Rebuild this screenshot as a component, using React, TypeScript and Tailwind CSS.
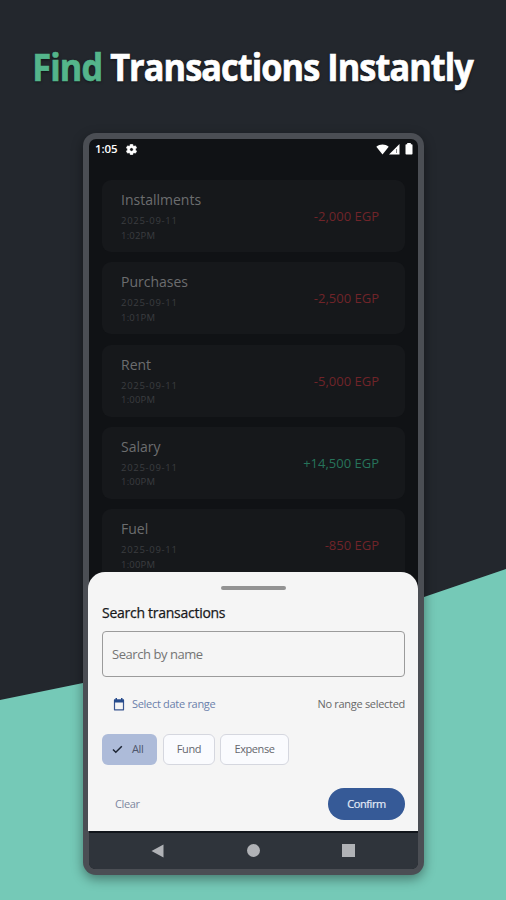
import React from "react";

type Transaction = { name: string; time: string; amount: string; income?: boolean };

const transactions: Transaction[] = [
  { name: "Installments", time: "1:02PM", amount: "-2,000 EGP" },
  { name: "Purchases", time: "1:01PM", amount: "-2,500 EGP" },
  { name: "Rent", time: "1:00PM", amount: "-5,000 EGP" },
  { name: "Salary", time: "1:00PM", amount: "+14,500 EGP", income: true },
  { name: "Fuel", time: "1:00PM", amount: "-850 EGP" },
];

function Backdrop() {
  return (
    <svg className="absolute inset-0" width="506" height="900" viewBox="0 0 506 900">
      <path d="M0 700L83 683L296 641L424 597L506 569V900H0Z" fill="#75c9b7" />
    </svg>
  );
}

function StatusBar() {
  return (
    <div className="flex h-5 items-center justify-between pl-[6px] pr-[5px] text-white">
      <div className="flex items-center gap-[8px]">
        <span className="w-[23px] whitespace-nowrap text-[11.500px] font-semibold leading-5 tracking-[-0.100px]">1:05</span>
        <svg width="11" height="11" viewBox="2 2 20 20" fill="currentColor" stroke="currentColor" strokeWidth="1">
          <path d="M19.14 12.94c.04-.3.06-.61.06-.94s-.02-.64-.07-.94l2.03-1.58a.5.5 0 0 0 .12-.61l-1.92-3.32a.5.5 0 0 0-.59-.22l-2.39.96a7 7 0 0 0-1.62-.94l-.36-2.54a.5.5 0 0 0-.48-.41h-3.84a.5.5 0 0 0-.47.41l-.36 2.54c-.59.24-1.13.57-1.62.94l-2.39-.96a.5.5 0 0 0-.59.22L2.74 8.87a.5.5 0 0 0 .12.61l2.03 1.58a7.500 7.500 0 0 0 0 1.880l-2.030 1.580a.5.5 0 0 0-.12.61l1.920 3.320c.12.220.370.290.590.220l2.390-.960c.500.380 1.030.700 1.620.940l.360 2.540c.05.240.240.410.480.410h3.840c.240 0 .440-.170.470-.410l.360-2.540c.590-.240 1.130-.560 1.620-.940l2.390.960c.220.080.470 0 .590-.220l1.920-3.320a.5.5 0 0 0-.120-.610zM12 15.300A3.300 3.300 0 1 1 12 8.700a3.300 3.300 0 0 1 0 6.600z" />
        </svg>
      </div>
      <div className="flex items-center">
        <svg width="13" height="11" viewBox="0 0 13 11" fill="currentColor">
          <path d="M0.300 2.800C3.800-.300 9.200-.300 12.700 2.800L6.500 10.500Z" />
        </svg>
        <svg width="11" height="11" viewBox="0 0 11 11">
          <path d="M0 10.500L10.500 0V10.500Z" fill="white" />
          <path d="M7.500 5v4" stroke="#111317" strokeWidth="1" opacity=".5" />
        </svg>
        <svg className="ml-[5px]" width="8" height="12" viewBox="0 0 8 12" fill="currentColor">
          <path d="M2.200 0H5.800V1.300H6.700Q7.500 1.300 7.500 2.100V10.700Q7.500 11.500 6.700 11.500H1.300Q.500 11.500 .500 10.700V2.100Q.500 1.300 1.300 1.300H2.200Z" />
        </svg>
      </div>
    </div>
  );
}

function TransactionCard({ item }: { item: Transaction }) {
  return (
    <div className="flex h-[72px] shrink-0 items-center justify-between rounded-[9px] bg-[#16181b] pl-[19px] pr-[26px] pt-[2px]">
      <div>
        <div className="text-[14px] leading-[18px] text-[#6c6d6f]">{item.name}</div>
        <div className="mt-[5px] text-[9.500px] leading-[14.500px] tracking-[0.700px] text-[#3b3d40]">
          <div>2025-09-11</div>
          <div className="tracking-[0.200px]">{item.time}</div>
        </div>
      </div>
      <div className={item.income ? "pb-[2px] text-[13px] leading-[18px] text-[#26735a]" : "pb-[2px] text-[13px] leading-[18px] text-[#702429]"}>{item.amount}</div>
    </div>
  );
}

function SearchSheet() {
  return (
    <div className="absolute left-[-1px] right-0 top-[433px] flex h-[259px] flex-col rounded-t-[17px] bg-[#f5f5f5] pl-[14px] pr-[13px]">
      <div className="mt-[14px] h-[4px] w-[65px] self-center rounded-full bg-[#939393]" />
      <h2 className="mt-[13px] text-[14px] font-medium leading-5 tracking-[-0.270px] text-[#17181a] [-webkit-text-stroke:0.250px_#17181a]">Search transactions</h2>
      <div className="mt-[8px] flex h-[46px] shrink-0 items-center rounded-[4px] border border-[#9b9b9b] pl-[9px] pt-px text-[13px] tracking-[-0.450px] text-[#747474]">
        Search by name
      </div>
      <div className="mt-[17px] flex h-5 items-center justify-between text-[11px] tracking-[-0.300px]">
        <div className="flex items-center gap-[7px] pl-[11px] text-[#6b80ab]">
          <svg width="12" height="13" viewBox="0 0 12 13">
            <path d="M1.500 2H10.500V11.800H1.500Z" fill="none" stroke="#38558f" strokeWidth="1.200" strokeLinejoin="round" />
            <path d="M1 1.500H11V4.500H1ZM2.500 0h1.500v2h-1.500zM8 0h1.500v2H8z" fill="#264b8c" />
          </svg>
          <span>Select date range</span>
        </div>
        <span className="text-[#686868]">No range selected</span>
      </div>
      <div className="mt-[20px] flex gap-[6px] text-[11px] tracking-[-0.400px] text-[#65676d]">
        <div className="flex h-[31px] w-[55px] items-center gap-[9px] rounded-[6px] bg-[#adbbd9] pl-[10px] text-[#4d566b]">
          <svg width="11" height="9" viewBox="0 0 11 9" fill="none" stroke="#1c2433" strokeWidth="1.500">
            <path d="M1 4.500L3.800 7.300L9.800 1.200" />
          </svg>
          <span>All</span>
        </div>
        <div className="flex h-[31px] w-[52px] items-center justify-center rounded-[6px] border border-[#d5d7df] bg-[#fafbfe]">Fund</div>
        <div className="-ml-px flex h-[31px] w-[69px] items-center justify-center rounded-[6px] border border-[#d5d7df] bg-[#fafbfe]">Expense</div>
      </div>
      <div className="mt-[23px] flex h-8 items-center justify-between text-[11px] tracking-[-0.400px]">
        <span className="pl-[13px] text-[#7d87a0]">Clear</span>
        <div className="flex h-8 w-[77px] items-center justify-center rounded-full bg-[#365a97] font-medium text-[#e4ebf7] [-webkit-text-stroke:0.200px_#e4ebf7]">Confirm</div>
      </div>
    </div>
  );
}

function NavigationBar() {
  return (
    <div className="absolute inset-x-0 bottom-0 flex h-[38px] items-center justify-between rounded-b-[6px] border-t-2 border-[#11151b] bg-[#2f343b] pb-px pl-[62px] pr-[63px]">
      <svg width="13" height="14" viewBox="0 0 13 14"><path d="M12.500 .500V13.500L.500 7Z" fill="#b0b2b6" /></svg>
      <div className="h-[13px] w-[13px] rounded-full bg-[#b0b2b6]" />
      <div className="h-[13px] w-[13px] bg-[#b0b2b6]" />
    </div>
  );
}

export default function App() {
  return (
    <main className="relative h-[900px] w-[506px] overflow-hidden bg-[#23272d] font-['Open_Sans',sans-serif]">
      <Backdrop />
      <div className="relative flex flex-col items-center">
        <h1 className="mt-[42px] h-[50px] origin-center scale-x-[.927] whitespace-nowrap text-[37px] font-bold leading-[50px] tracking-[-1px] text-white [-webkit-text-stroke:0.700px_currentColor] [text-shadow:0_1px_3px_#0009]">
          <span className="text-[#54b58b]">Find</span> Transactions Instantly
        </h1>
        <div className="ml-px mt-[41px] h-[742px] w-[341px] rounded-[13px] bg-[#4b4e54] p-[6px] shadow-[0_4px_12px_#00000066]">
          <div className="relative h-[730px] w-[329px] overflow-visible rounded-[7px] bg-[#101215]">
            <StatusBar />
            <div className="flex h-[413px] flex-col gap-[10.300px] overflow-hidden px-[13px] pt-[21px]">
              {transactions.map((item) => <TransactionCard key={item.name} item={item} />)}
            </div>
            <SearchSheet />
            <NavigationBar />
          </div>
        </div>
      </div>
    </main>
  );
}
